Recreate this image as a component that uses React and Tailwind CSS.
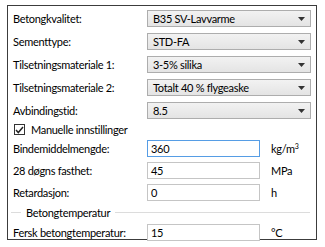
import React from 'react';

const font = { fontFamily: 'Lato, "Noto Sans", sans-serif' };

const Caret = () => (
  <svg width="7" height="4" viewBox="0 0 7 4" className="shrink-0">
    <path d="M0 0h7L3.5 4z" fill="#333" />
  </svg>
);

const txt = 'text-[11px] tracking-[-0.3px] text-black leading-none whitespace-nowrap';

const ComboRow = ({ label, value }) => (
  <div className="flex items-center h-[23px]">
    <div className={`w-[139px] pl-[5px] ${txt}`}>{label}</div>
    <div className="flex items-center justify-between w-[164px] h-[17px] border border-[#adadad] bg-gradient-to-b from-[#f2f2f2] to-[#e4e4e4] pl-[5px] pr-[5px]">
      <span className={txt}>{value}</span>
      <Caret />
    </div>
  </div>
);

const InputRow = ({ label, value, unit, focused }) => (
  <div className="flex items-center h-[22px]">
    <div className={`w-[139px] pl-[5px] ${txt}`}>{label}</div>
    <div
      className={`flex items-center w-[113px] h-[17px] border bg-white pl-[3px] ${
        focused ? 'border-[#569de5]' : 'border-[#c5c5c5]'
      }`}
    >
      <span className={txt}>{value}</span>
    </div>
    <div className={`pl-[11px] ${txt}`}>{unit}</div>
  </div>
);

export default function App() {
  return (
    <div className="w-[325px] h-[247px] bg-white pt-[5px] pl-[7px]" style={font}>
      <div className="w-[310px] h-[235px] border border-[#3c3c3c] pt-[1px]">
        <ComboRow label="Betongkvalitet:" value="B35 SV-Lavvarme" />
        <ComboRow label="Sementtype:" value="STD-FA" />
        <ComboRow label="Tilsetningsmateriale 1:" value="3-5% silika" />
        <ComboRow label="Tilsetningsmateriale 2:" value="Totalt 40 % flygeaske" />
        <ComboRow label="Avbindingstid:" value="8.5" />
        <div className="flex items-center h-[15px] pl-[6px] gap-[6px]">
          <div className="w-[11px] h-[11px] border border-[#333] bg-white flex items-center justify-center">
            <svg width="9" height="8" viewBox="0 0 9 8">
              <path d="M1 4l2.3 2.5L8 1" stroke="#222" strokeWidth="1.5" fill="none" />
            </svg>
          </div>
          <span className={txt}>Manuelle innstillinger</span>
        </div>
        <InputRow label="Bindemiddelmengde:" value="360" unit={<>kg/m<sup className="text-[7px]">3</sup></>} focused />
        <InputRow label="28 døgns fasthet:" value="45" unit="MPa" />
        <InputRow label="Retardasjon:" value="0" unit="h" />
        <div className="flex items-center h-[18px] pl-[3px] pr-[6px] gap-[5px]">
          <div className="w-[10px] h-px bg-[#dcdcdc]" />
          <span className={txt}>Betongtemperatur</span>
          <div className="flex-1 h-px bg-[#dcdcdc]" />
        </div>
        <InputRow label="Fersk betongtemperatur:" value="15" unit="°C" />
      </div>
    </div>
  );
}
